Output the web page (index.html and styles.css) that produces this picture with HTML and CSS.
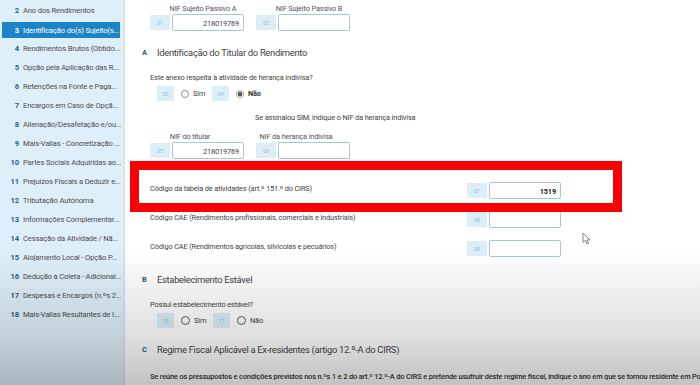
FILE: index.html
```html
<!DOCTYPE html>
<html lang="pt">

<head>
    <meta charset="UTF-8">
    <meta name="viewport" content="width=device-width, initial-scale=1.0">
    <title>Anexo B - Quadro 3</title>
    <link rel="stylesheet" href="styles.css">
</head>

<body>
    <div class="page">
        <!-- lista de quadros do anexo -->
        <aside class="sidebar">
            <ul class="quadros">
                <li><b>2</b><span>Ano dos Rendimentos</span></li>
                <li class="active"><b>3</b><span>Identificação do(s) Sujeito(s...</span></li>
                <li><b>4</b><span>Rendimentos Brutos (Obtido...</span></li>
                <li><b>5</b><span>Opção pela Aplicação das R...</span></li>
                <li><b>6</b><span>Retenções na Fonte e Paga...</span></li>
                <li><b>7</b><span>Encargos em Caso de Opçã...</span></li>
                <li><b>8</b><span>Alienação/Desafetação e/ou...</span></li>
                <li><b>9</b><span>Mais-Valias - Concretização ...</span></li>
                <li><b>10</b><span>Partes Sociais Adquiridas ao...</span></li>
                <li><b>11</b><span>Prejuízos Fiscais a Deduzir e...</span></li>
                <li><b>12</b><span>Tributação Autónoma</span></li>
                <li><b>13</b><span>Informações Complementar...</span></li>
                <li><b>14</b><span>Cessação da Atividade / Nã...</span></li>
                <li><b>15</b><span>Alojamento Local - Opção P...</span></li>
                <li><b>16</b><span>Dedução à Coleta - Adicional...</span></li>
                <li><b>17</b><span>Despesas e Encargos (n.ºs 2...</span></li>
                <li><b>18</b><span>Mais-Valias Resultantes de I...</span></li>
            </ul>
        </aside>

        <main class="form">
            <div class="nif-row">
                <div class="field-group">
                    <div class="field-label">NIF Sujeito Passivo A</div>
                    <div class="field"><span class="num">01</span><span class="input">218019769</span></div>
                </div>
                <div class="field-group">
                    <div class="field-label">NIF Sujeito Passivo B</div>
                    <div class="field"><span class="num">02</span><span class="input"></span></div>
                </div>
            </div>

            <h3 class="section-title"><span class="letter">A</span><span>Identificação do Titular do Rendimento</span></h3>
            <p class="question">Este anexo respeita à atividade de herança indivisa?</p>
            <div class="radios">
                <span class="num">03</span><span class="radio"></span><span class="radio-label">Sim</span>
                <span class="num">04</span><span class="radio checked"></span><span class="radio-label strong">Não</span>
            </div>
            <p class="hint">Se assinalou SIM, indique o NIF da herança indivisa</p>
            <div class="nif-row nif-row-low">
                <div class="field-group">
                    <div class="field-label">NIF do titular</div>
                    <div class="field"><span class="num">05</span><span class="input">218019769</span></div>
                </div>
                <div class="field-group">
                    <div class="field-label">NIF da herança indivisa</div>
                    <div class="field"><span class="num">06</span><span class="input"></span></div>
                </div>
            </div>

            <div class="code-row first">
                <span class="code-label">Código da tabela de atividades (art.º 151.º do CIRS)</span>
                <div class="field"><span class="num">07</span><span class="input bold">1519</span></div>
            </div>
            <div class="code-row">
                <span class="code-label">Código CAE (Rendimentos profissionais, comerciais e industriais)</span>
                <div class="field"><span class="num">08</span><span class="input"></span></div>
            </div>
            <div class="code-row">
                <span class="code-label">Código CAE (Rendimentos agrícolas, silvícolas e pecuários)</span>
                <div class="field"><span class="num">09</span><span class="input"></span></div>
            </div>

            <h3 class="section-title section-b"><span class="letter">B</span><span>Estabelecimento Estável</span></h3>
            <p class="question">Possui estabelecimento estável?</p>
            <div class="radios">
                <span class="num">10</span><span class="radio thick"></span><span class="radio-label">Sim</span>
                <span class="num">11</span><span class="radio thick"></span><span class="radio-label">Não</span>
            </div>

            <h3 class="section-title section-c"><span class="letter">C</span><span>Regime Fiscal Aplicável a Ex-residentes (artigo 12.º-A do CIRS)</span></h3>
            <p class="long-text">Se reúne os pressupostos e condições previstos nos n.ºs 1 e 2 do art.º 12.º-A do CIRS e pretende usufruir deste regime fiscal, indique o ano em que se tornou residente em Portugal</p>

            <!-- marcação a vermelho por cima do campo 07 -->
            <div class="highlight"></div>
            <svg class="cursor" width="9" height="13" viewBox="0 0 9 13">
                <path d="M1 1 L1 10.5 L3.4 8.4 L5 12 L6.4 11.4 L4.9 7.9 L8 7.9 Z" fill="#fff" stroke="#777" stroke-width="0.9" stroke-linejoin="round" />
            </svg>
        </main>

        <!-- sombra do vídeo na parte de baixo -->
        <div class="shade"></div>
    </div>
</body>

</html>
```

FILE: styles.css
```css
body {
    margin: 0;
    font-family: Roboto, "Noto Sans", sans-serif;
    color: #444;
    background-color: #fff;
}

.page {
    position: relative;
    display: flex;
    width: 700px;
    height: 385px;
    overflow: hidden;
}

/* sidebar */

.sidebar {
    flex: none;
    width: 125px;
    min-width: 0;
    overflow: hidden;
    background-color: #dfeff9;
    border-right: 2px solid #d2e5f1;
    padding: 1px 3px 0 2px;
    box-sizing: border-box;
}

.quadros {
    list-style-type: none;
    margin: 0;
    padding: 0;
}

.quadros li {
    display: flex;
    align-items: center;
    height: 19px;
    font-size: 7.6px;
    letter-spacing: -0.15px;
    color: #4d4d4d;
}

.quadros li b {
    flex: 0 0 21px;
    text-align: right;
    padding-right: 4px;
    box-sizing: border-box;
    color: #25618b;
    font-weight: 700;
}

.quadros li span {
    white-space: nowrap;
}

.quadros li.active {
    height: 16px;
    margin: 2px 0 1px;
    background-color: #1c84c6;
    color: #fff;
}

.quadros li.active b {
    color: #fff;
}

/* form */

.form {
    position: relative;
    flex: 1;
    min-width: 0;
    padding: 4px 0 0 25px;
    font-size: 7.4px;
    letter-spacing: -0.15px;
}

.nif-row {
    display: flex;
    gap: 12px;
}

.nif-row-low {
    margin-top: 8px;
}

.field-label {
    height: 10px;
    line-height: 10px;
    text-align: center;
    padding-left: 12px;
    color: #555;
}

.nif-row-low .field-label {
    padding-left: 0;
    margin-right: 14px;
}

.field {
    display: flex;
    align-items: center;
    gap: 2px;
    height: 17px;
}

.num {
    display: inline-flex;
    align-items: center;
    justify-content: center;
    width: 20px;
    height: 15px;
    background-color: #dceef8;
    color: #98c0d6;
    font-size: 5.6px;
}

.input {
    width: 72px;
    height: 17px;
    line-height: 17px;
    border: 1px solid #a8c6d6;
    border-radius: 2px;
    box-sizing: border-box;
    text-align: right;
    padding-right: 4px;
    color: #444;
}

.input.bold {
    font-weight: 700;
    color: #222;
}

.section-title {
    display: flex;
    align-items: center;
    height: 20px;
    margin: 11px 0 0 -8px;
    font-size: 9.4px;
    font-weight: 400;
    letter-spacing: -0.3px;
    color: #3f3f3f;
}

.section-title .letter {
    flex: 0 0 15px;
    font-size: 7.5px;
    font-weight: 700;
    color: #1f5f8c;
}

.section-b {
    margin-top: 12px;
}

.question {
    margin: 10px 0 0;
    height: 12px;
    line-height: 12px;
}

.radios {
    display: flex;
    align-items: center;
    height: 15px;
    margin-top: 2px;
    padding-left: 7px;
}

.radios .num {
    width: 17px;
}

.radio {
    width: 8px;
    height: 8px;
    margin: 0 4px 0 7px;
    border: 1px solid #8a8a8a;
    border-radius: 50%;
    box-sizing: border-box;
}

.radio.checked {
    border-color: #9a9a9a;
    background: radial-gradient(circle, #555 0 2px, #fff 2.5px);
}

.radio.thick {
    border: 1.5px solid #555;
    width: 9px;
    height: 9px;
}

.radio-label {
    margin-right: 6px;
    width: 13px;
}

.radio-label.strong {
    font-weight: 700;
    color: #333;
}

.hint {
    margin: 11px 0 0 105px;
    height: 12px;
    line-height: 12px;
}

.code-row {
    display: flex;
    align-items: center;
    justify-content: space-between;
    width: 411px;
    height: 17px;
    margin-top: 12px;
}

.code-row.first {
    margin-top: 23px;
}

.code-label {
    margin-top: -4px;
}

.long-text {
    margin: 12px 0 0;
    white-space: nowrap;
    font-weight: 500;
    color: #333;
    line-height: 12px;
}

/* overlays */

.highlight {
    position: absolute;
    left: 5px;
    top: 161px;
    width: 492px;
    height: 51px;
    border: 9px solid #fb0000;
    box-sizing: border-box;
}

.cursor {
    position: absolute;
    left: 457px;
    top: 232px;
}

.shade {
    position: absolute;
    left: 0;
    right: 0;
    top: 250px;
    bottom: 0;
    pointer-events: none;
    background: linear-gradient(to bottom, rgba(0, 0, 0, 0) 0%, rgba(0, 0, 0, 0.05) 25%, rgba(0, 0, 0, 0.13) 65%, rgba(0, 0, 0, 0.24) 100%);
}
```
